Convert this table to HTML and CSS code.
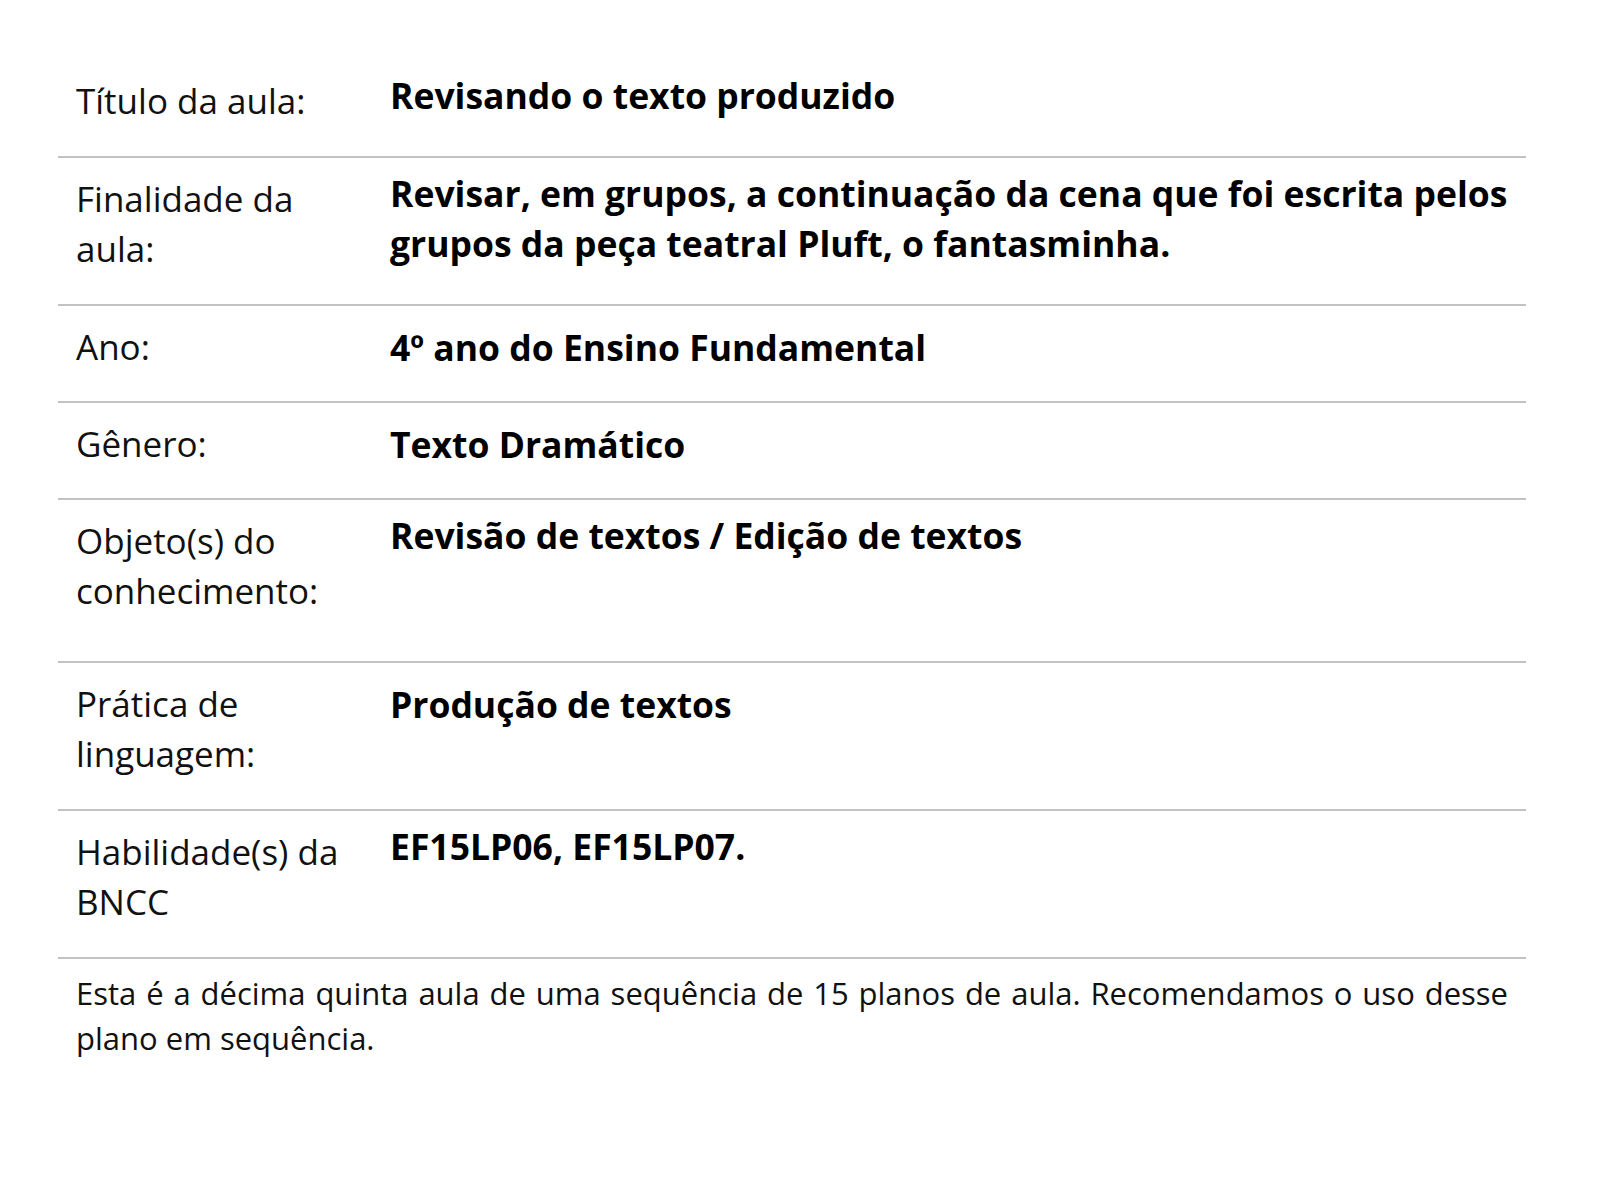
FILE: index.html
```html
<!DOCTYPE html>
<html lang="pt-BR">
<head>
<meta charset="utf-8">
<title>Plano de aula</title>
<link rel="stylesheet" href="styles.css">
</head>
<body>
<main class="page">
  <div class="info">
    <div class="row raised">
      <div class="label">Título da aula:</div>
      <div class="value">Revisando o texto produzido</div>
    </div>
    <div class="row raised">
      <div class="label">Finalidade da aula:</div>
      <div class="value">Revisar, em grupos, a continuação da cena que foi escrita pelos grupos da peça teatral Pluft, o fantasminha.</div>
    </div>
    <div class="row short">
      <div class="label">Ano:</div>
      <div class="value">4º ano do Ensino Fundamental</div>
    </div>
    <div class="row short">
      <div class="label">Gênero:</div>
      <div class="value">Texto Dramático</div>
    </div>
    <div class="row raised tall">
      <div class="label">Objeto(s) do conhecimento:</div>
      <div class="value">Revisão de textos / Edição de textos</div>
    </div>
    <div class="row">
      <div class="label">Prática de linguagem:</div>
      <div class="value">Produção de textos</div>
    </div>
    <div class="row raised">
      <div class="label">Habilidade(s) da BNCC</div>
      <div class="value">EF15LP06, EF15LP07.</div>
    </div>
  </div>
  <p class="note">Esta é a décima quinta aula de uma sequência de 15 planos de aula. Recomendamos o uso desse plano em sequência.</p>
</main>
</body>
</html>
```

FILE: styles.css
```css
html, body {
  margin: 0;
  padding: 0;
  background: #ffffff;
}

body {
  font-family: "Open Sans", "Noto Sans", sans-serif;
  color: #000000;
}

.page {
  width: 1468px;
  margin-left: 58px;
  padding-top: 60px;
}

.info {
  display: flex;
  flex-direction: column;
}

.row {
  display: grid;
  grid-template-columns: 316px 1fr;
  border-bottom: 2px solid #c2c2c2;
  padding: 16px 0 30px;
}

.row.short {
  padding-bottom: 29px;
}

.row.tall {
  padding-bottom: 45px;
}

.label {
  padding: 0 18px;
  font-size: 35px;
  line-height: 50px;
  color: #111111;
}

.value {
  padding: 0 0 0 16px;
  font-size: 35.5px;
  line-height: 50px;
  font-weight: 700;
  color: #000000;
}

.row.raised .value {
  position: relative;
  top: -6px;
}

.note {
  margin: 0;
  padding: 12px 18px 0;
  font-size: 31px;
  line-height: 45px;
  text-align: justify;
  color: #111111;
}
```
